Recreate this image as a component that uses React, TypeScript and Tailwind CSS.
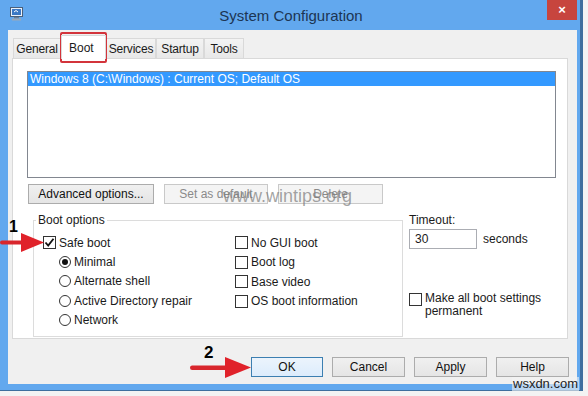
import React from "react";

const tabs = [
  { label: "General", w: "w-[48px]" },
  { label: "Boot", w: "w-[45px]", active: true },
  { label: "Services", w: "w-[50px]" },
  { label: "Startup", w: "w-[48px]" },
  { label: "Tools", w: "w-[40px]" },
];

function CheckBox({ checked = false }: { checked?: boolean }) {
  return (
    <span className="w-[13px] h-[13px] border border-[#333] bg-white flex items-center justify-center shrink-0">
      {checked && (
        <svg width="11" height="11" viewBox="0 0 11 11">
          <path d="M1.5 5.5 L4.2 8.5 L9.5 1.8" fill="none" stroke="#111" strokeWidth="1.8" />
        </svg>
      )}
    </span>
  );
}

function Radio({ checked = false }: { checked?: boolean }) {
  return (
    <span className="w-[12px] h-[12px] rounded-full border border-[#333] bg-white flex items-center justify-center shrink-0">
      {checked && <span className="w-[6px] h-[6px] rounded-full bg-[#111]" />}
    </span>
  );
}

function Btn({
  children,
  w,
  disabled = false,
  focus = false,
}: {
  children: React.ReactNode;
  w: string;
  disabled?: boolean;
  focus?: boolean;
}) {
  return (
    <div
      className={`${w} h-[20px] flex items-center justify-center border ${
        disabled
          ? "bg-[#f4f4f4] border-[#c9c9c9] text-[#8a8a8a]"
          : focus
          ? "bg-gradient-to-b from-[#ecf4fc] to-[#dcecfc] border-[#3c7fb1] text-[#111]"
          : "bg-gradient-to-b from-[#f0f0f0] to-[#e5e5e5] border-[#acacac] text-[#111]"
      }`}
    >
      {children}
    </div>
  );
}

export default function App() {
  return (
    <div className="relative w-[588px] h-[396px] bg-[#f3f3f3] overflow-hidden font-['Liberation_Sans',Arial,sans-serif] text-[12px] text-[#1a1a1a]">
      {/* window */}
      <div className="w-[583px] h-[391px] bg-[#62a8ee] border-r-[3px] border-b border-[#3e6f9e] flex flex-col">
        {/* title bar */}
        <div className="h-[30px] flex items-start shrink-0">
          <svg className="ml-[10px] mt-[7px]" width="13" height="14" viewBox="0 0 13 14">
            <rect x="0.5" y="0.5" width="12" height="9" fill="#eaf2fb" stroke="#4a5f7a" />
            <rect x="2" y="2" width="9" height="6" fill="#3b78c4" />
            <path d="M4 5 L6 3.5 L8 5" stroke="#fff" fill="none" strokeWidth="1" />
            <rect x="4" y="10" width="5" height="1.5" fill="#6b7d92" />
            <rect x="2" y="11.5" width="9" height="2" fill="#9aa8b8" />
          </svg>
          <div className="flex-1 text-center pt-[5px] pl-[12px] text-[15px] text-[#1c3553]">
            System Configuration
          </div>
          <div className="w-[30px] h-[20px] mr-[3px] bg-[#c7453e] flex items-center justify-center text-white text-[13px] font-bold">
            ×
          </div>
        </div>

        {/* client area */}
        <div className="ml-[8px] mr-[3px] h-[354px] bg-[#f0f0f0] flex flex-col">
          {/* tabs */}
          <div className="flex items-end h-[28px] pl-[5px]">
            {tabs.map((t) =>
              t.active ? (
                <div
                  key={t.label}
                  className={`${t.w} h-[24px] bg-white border border-b-0 border-[#d9d9d9] -mb-px relative z-10 pl-[7px] pt-[3px]`}
                >
                  {t.label}
                </div>
              ) : (
                <div
                  key={t.label}
                  className={`${t.w} h-[20px] bg-gradient-to-b from-[#f3f3f3] to-[#e8e8e8] border border-b-0 border-[#d9d9d9] flex items-center justify-center whitespace-nowrap tracking-[-0.2px]`}
                >
                  {t.label}
                </div>
              )
            )}
          </div>

          {/* tab panel */}
          <div className="ml-[4px] w-[556px] h-[281px] bg-white border border-[#d9d9d9] flex flex-col">
            {/* list box */}
            <div className="ml-[14px] mt-[12px] w-[529px] h-[107px] border border-[#828790] bg-white">
              <div className="h-[14px] bg-[#3399ff] text-white leading-[14px] pl-[2px]">
                Windows 8 (C:\Windows) : Current OS; Default OS
              </div>
            </div>

            {/* buttons */}
            <div className="ml-[15px] mt-[6px] flex gap-[10px]">
              <Btn w="w-[126px]">Advanced options...</Btn>
              <Btn w="w-[104px]" disabled>
                Set as default
              </Btn>
              <Btn w="w-[105px]" disabled>
                Delete
              </Btn>
            </div>

            {/* lower section */}
            <div className="flex mt-[9px]">
              <fieldset className="ml-[20px] w-[370px] h-[124px] border border-[#dcdcdc] pl-[9px]">
                <legend className="px-[2px] -ml-[7px] leading-[14px]">Boot options</legend>
                <div className="flex mt-[9px]">
                  <div className="flex flex-col gap-[6px] w-[192px]">
                    <div className="flex items-center gap-[3px] h-[13px]">
                      <CheckBox checked />
                      <span>Safe boot</span>
                    </div>
                    <div className="flex flex-col gap-[7.5px] pl-[16px] pt-[0.5px]">
                      {["Minimal", "Alternate shell", "Active Directory repair", "Network"].map(
                        (r, i) => (
                          <div key={r} className="flex items-center gap-[3px] h-[12px]">
                            <Radio checked={i === 0} />
                            <span>{r}</span>
                          </div>
                        )
                      )}
                    </div>
                  </div>
                  <div className="flex flex-col gap-[6.5px]">
                    {["No GUI boot", "Boot log", "Base video", "OS boot information"].map((c) => (
                      <div key={c} className="flex items-center gap-[3px] h-[13px]">
                        <CheckBox />
                        <span>{c}</span>
                      </div>
                    ))}
                  </div>
                </div>
              </fieldset>

              <div className="ml-[6px] flex flex-col">
                <div className="leading-[14px]">Timeout:</div>
                <div className="flex items-center mt-[2px]">
                  <div className="w-[68px] h-[20px] border border-[#abadb3] bg-white pl-[5px] leading-[18px]">
                    30
                  </div>
                  <span className="ml-[6px]">seconds</span>
                </div>
                <div className="flex items-start gap-[3px] mt-[44px]">
                  <CheckBox />
                  <span className="leading-[13px] -mt-px">
                    Make all boot settings
                    <br />
                    permanent
                  </span>
                </div>
              </div>
            </div>
          </div>

          {/* bottom buttons */}
          <div className="flex justify-end gap-[9px] pr-[8px] mt-[18px]">
            <Btn w="w-[72px]" focus>
              OK
            </Btn>
            <Btn w="w-[73px]">Cancel</Btn>
            <Btn w="w-[73px]">Apply</Btn>
            <Btn w="w-[73px]">Help</Btn>
          </div>
        </div>
      </div>

      {/* annotations */}
      <div className="absolute left-[60px] top-[32px] w-[47px] h-[31px] border-2 border-[#d3343b] rounded-[2px]" />

      <div className="absolute left-[223px] top-[183px] text-[18px] text-[#7c7c7c]/70">
        www.wintips.org
      </div>

      <div className="absolute left-[9px] top-[219px] text-[16px] font-bold text-black leading-none">1</div>
      <svg className="absolute left-0 top-[232px]" width="46" height="22" viewBox="0 0 46 22">
        <rect x="0" y="8.5" width="24" height="4" rx="2" fill="#d8262c" />
        <polygon points="21,1 44,10.5 21,20" fill="#e0222a" />
      </svg>

      <div className="absolute left-[204px] top-[344px] text-[17px] font-bold text-black leading-none">2</div>
      <svg className="absolute left-[188px] top-[356px]" width="66" height="24" viewBox="0 0 66 24">
        <rect x="2" y="9.5" width="40" height="4.5" rx="2.2" fill="#d8262c" />
        <polygon points="37,1 63,11.5 37,22" fill="#e0222a" />
      </svg>

      <div className="absolute left-[512px] top-[377px] text-[13px] text-[#222] leading-[14px] bg-[#f3f3f3]/60 px-[1px]">
        wsxdn.com
      </div>
    </div>
  );
}
